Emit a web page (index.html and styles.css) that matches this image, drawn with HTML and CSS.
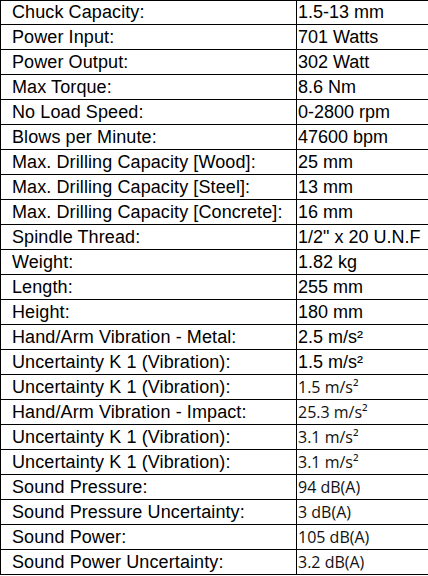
FILE: index.html
```html
<!DOCTYPE html>
<html lang="en">
<head>
<meta charset="utf-8">
<title>Specifications</title>
<link rel="stylesheet" href="styles.css">
</head>
<body>
<table class="specs">
  <colgroup><col class="col-label"><col class="col-value"></colgroup>
  <tbody>
    <tr class="first"><td class="label">Chuck Capacity:</td><td class="value">1.5-13 mm</td></tr>
    <tr><td class="label">Power Input:</td><td class="value">701 Watts</td></tr>
    <tr><td class="label">Power Output:</td><td class="value">302 Watt</td></tr>
    <tr><td class="label">Max Torque:</td><td class="value">8.6 Nm</td></tr>
    <tr><td class="label">No Load Speed:</td><td class="value">0-2800 rpm</td></tr>
    <tr><td class="label">Blows per Minute:</td><td class="value">47600 bpm</td></tr>
    <tr><td class="label">Max. Drilling Capacity [Wood]:</td><td class="value">25 mm</td></tr>
    <tr><td class="label">Max. Drilling Capacity [Steel]:</td><td class="value">13 mm</td></tr>
    <tr><td class="label">Max. Drilling Capacity [Concrete]:</td><td class="value">16 mm</td></tr>
    <tr><td class="label">Spindle Thread:</td><td class="value">1/2" x 20 U.N.F</td></tr>
    <tr><td class="label">Weight:</td><td class="value">1.82 kg</td></tr>
    <tr><td class="label">Length:</td><td class="value">255 mm</td></tr>
    <tr><td class="label">Height:</td><td class="value">180 mm</td></tr>
    <tr><td class="label">Hand/Arm Vibration - Metal:</td><td class="value">2.5 m/s²</td></tr>
    <tr><td class="label">Uncertainty K 1 (Vibration):</td><td class="value">1.5 m/s²</td></tr>
    <tr><td class="label">Uncertainty K 1 (Vibration):</td><td class="value alt">1.5 m/s²</td></tr>
    <tr><td class="label">Hand/Arm Vibration - Impact:</td><td class="value alt">25.3 m/s²</td></tr>
    <tr><td class="label">Uncertainty K 1 (Vibration):</td><td class="value alt">3.1 m/s²</td></tr>
    <tr><td class="label">Uncertainty K 1 (Vibration):</td><td class="value alt">3.1 m/s²</td></tr>
    <tr><td class="label">Sound Pressure:</td><td class="value alt">94 dB(A)</td></tr>
    <tr><td class="label">Sound Pressure Uncertainty:</td><td class="value alt">3 dB(A)</td></tr>
    <tr><td class="label">Sound Power:</td><td class="value alt">105 dB(A)</td></tr>
    <tr><td class="label">Sound Power Uncertainty:</td><td class="value alt">3.2 dB(A)</td></tr>
  </tbody>
</table>
</body>
</html>
```

FILE: styles.css
```css
html, body {
  margin: 0;
  padding: 0;
  background: #ffffff;
}

.specs {
  border-collapse: collapse;
  table-layout: fixed;
  width: 428px;
  font-family: "Liberation Sans", Arial, sans-serif;
  font-size: 18px;
  color: #000000;
}

.col-label {
  width: 296px;
}

.col-value {
  width: 132px;
}

.specs td {
  border: 1px solid #000000;
  height: 24px;
  padding: 0;
  vertical-align: middle;
  white-space: nowrap;
  box-sizing: content-box;
}

.specs .first td {
  height: 23px;
}

.label {
  padding-left: 11px !important;
  letter-spacing: 0.1px;
}

.value {
  padding-left: 1px !important;
}

.value.alt {
  font-family: "Open Sans", sans-serif;
  font-size: 16px;
  color: #111111;
}
```
